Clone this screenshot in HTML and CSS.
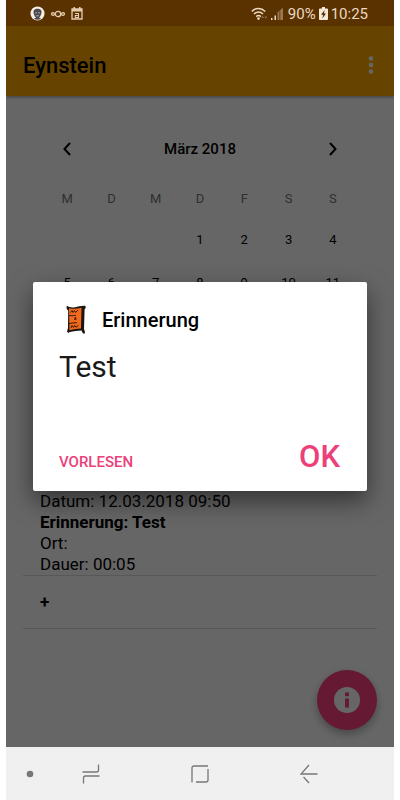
FILE: index.html
```html
<!DOCTYPE html>
<html lang="de">
<head>
<meta charset="utf-8">
<meta name="viewport" content="width=device-width, initial-scale=1">
<title>Eynstein</title>
<link rel="stylesheet" href="styles.css">
</head>
<body>
<div class="phone">
  <header class="status">
    <div class="status-group">
      <svg width="15" height="15" viewBox="0 0 16 16" aria-hidden="true">
        <circle cx="8" cy="8" r="7.5" fill="#f6efe6"/>
        <path d="M3.800 7.500C3.400 4 5.400 2.800 8 2.800s4.800 1.200 4.300 4.700l-.8 2.200c-.5 1.800-1.200 2.300-2 2.600l2.400 1.200c-2.200 1.600-5.600 1.600-7.800 0l2.400-1.200c-1-.4-1.600-1.200-2-2.600z" fill="#4b4a4c"/>
        <path d="M5.400 7.300h2.100M8.600 7.300h2.100M6.600 10.400h2.800" stroke="#b9b3ad" stroke-width="1"/>
      </svg>
      <svg width="14" height="10" viewBox="0 0 14 10" fill="none" stroke="#e3cdb2" stroke-width="1.300" aria-hidden="true">
        <circle cx="7" cy="5" r="2.700"/><circle cx="2" cy="5" r="1.400"/><circle cx="12" cy="5" r="1.400"/>
      </svg>
      <svg width="12" height="13" viewBox="0 0 12 13" aria-hidden="true">
        <path d="M1 2h10v10H1z" fill="none" stroke="#e3cdb2" stroke-width="1.300"/>
        <path d="M1 2h10v2.600H1zM2.400 0h1.600v2H2.400zM8 0h1.600v2H8z" fill="#e3cdb2"/>
        <path d="M4 6.500h3.500v4H4.300V8.500h3" fill="none" stroke="#e3cdb2" stroke-width="1.100"/>
      </svg>
    </div>
    <div class="status-group status-right">
      <svg width="34" height="14" viewBox="0 0 34 14" aria-hidden="true">
        <path d="M.8 4.400C4.600 .5 10.400 .5 14.200 4.400M3 7.100c2.600-2.700 6.400-2.700 9 0M5.200 9.600c1.400-1.400 3.200-1.400 4.600 0" fill="none" stroke="#ecd9c2" stroke-width="1.500"/>
        <circle cx="7.500" cy="11.600" r="1.300" fill="#ecd9c2"/>
        <path d="M10.200 11l1.400-2.600 1.400 2.600zM13.400 9.400h2.800l-1.400 2.800z" fill="#8c6a45"/>
        <path d="M20 11h1.500v2H20zM23.500 8.500H25V13h-1.500z" fill="#ecd9c2"/>
        <path d="M26.500 5.500L28.500 3.600V13h-2zM29.200 3L32 .8V13h-2.800z" fill="#9a7752"/>
      </svg>
      <span>90%</span>
      <svg width="9" height="13" viewBox="0 0 9 13" aria-hidden="true">
        <path d="M3 0h3v1.500h2.200q.8 0 .8.800V12q0 1-.8 1H.8Q0 13 0 12V2.300q0-.8.800-.8H3z" fill="#f6e8d6"/>
        <path d="M5.700 3L2 7.800h2.200L3.300 11.400 7 6.600H4.900z" fill="#4a2a00"/>
      </svg>
      <span>10:25</span>
    </div>
  </header>

  <div class="app">
    <div class="toolbar">
      <h1>Eynstein</h1>
      <button type="button" aria-label="Menü">
        <svg width="6" height="18" viewBox="0 0 6 18" fill="#fff"><circle cx="3" cy="2.500" r="2.300"/><circle cx="3" cy="9" r="2.300"/><circle cx="3" cy="15.500" r="2.300"/></svg>
      </button>
    </div>

    <main class="content">
      <section class="calendar">
        <div class="month">
          <button type="button" aria-label="Voriger Monat">
            <svg width="8" height="14" viewBox="0 0 8 14" fill="none" stroke="#000" stroke-width="2"><path d="M7 1L1.500 7 7 13"/></svg>
          </button>
          <h2>März 2018</h2>
          <button type="button" aria-label="Nächster Monat">
            <svg width="8" height="14" viewBox="0 0 8 14" fill="none" stroke="#000" stroke-width="2"><path d="M1 1l5.500 6L1 13"/></svg>
          </button>
        </div>
        <table class="days">
          <thead><tr><th>M</th><th>D</th><th>M</th><th>D</th><th>F</th><th>S</th><th>S</th></tr></thead>
          <tbody>
            <tr><td></td><td></td><td></td><td>1</td><td>2</td><td>3</td><td>4</td></tr>
            <tr><td>5</td><td>6</td><td>7</td><td>8</td><td>9</td><td>10</td><td>11</td></tr>
          </tbody>
        </table>
      </section>
      <ul class="entries">
        <li>
          <p>Datum: 12.03.2018 09:50</p>
          <p><strong>Erinnerung: Test</strong></p>
          <p>Ort:</p>
          <p>Dauer: 00:05</p>
        </li>
        <li class="add"><button type="button">+</button></li>
      </ul>
    </main>

    <button class="fab" type="button" aria-label="Info">
      <svg width="26" height="26" viewBox="0 0 26 26"><circle cx="13" cy="13" r="13" fill="#fff"/><path d="M11 5.500h4v3.700h-4zM11 11.500h4v9h-4z" fill="#ff4081"/></svg>
    </button>

    <div class="scrim">
      <div class="dialog" role="dialog" aria-labelledby="dialog-title">
        <div class="dialog-head">
          <svg width="22" height="30" viewBox="0 0 22 30" aria-hidden="true">
            <path d="M2 .8c2 1.600 5 2 8 1.400S17 .5 20 .8c1.200 1 .8 2.600-.4 3.400L19 24.500c1 1.200 1.200 3 .6 4.300l-1.800-.6-1.300-2.800c-4 .4-8 .6-11.600 1.600L3.200 28 2 26.500 3 23 3.200 5.500C1.600 4.500 1 2.500 2 .8z" fill="#1c1512"/>
            <path d="M4 3.200c4 1 8.500.6 12.500-.4L16 23.500c-4 .2-7.500.6-11.500 1.700z" fill="#f26a1b"/>
            <path d="M5.500 7.500l1.500-2 1 2 1.500-2 1 2L13 5M4 10.500c3 .4 5 .2 7-.2M9.500 15l1-3 .5 3M4 18.500c3-.4 5-.8 8-.8M6 23l1-2.500 1.500 2 1-2.200 1.500 2 2.500-2" fill="none" stroke="#3a1708" stroke-width="1"/>
          </svg>
          <h2 id="dialog-title">Erinnerung</h2>
        </div>
        <p class="message">Test</p>
        <div class="actions">
          <button type="button">VORLESEN</button>
          <button class="confirm" type="button">OK</button>
        </div>
      </div>
    </div>
  </div>

  <nav class="navbar">
    <button type="button" aria-label="Leiste ausblenden">
      <svg width="8" height="8" viewBox="0 0 8 8"><circle cx="4" cy="4" r="3.300" fill="#777"/></svg>
    </button>
    <div class="nav-main">
      <button type="button" aria-label="Letzte Apps">
        <svg width="18" height="20" viewBox="0 0 18 20" fill="none" stroke="#777" stroke-width="1.300"><path d="M.5 8h14q2 0 2-2V.5M17.500 12h-14q-2 0-2 2v5.500"/></svg>
      </button>
      <button type="button" aria-label="Startseite">
        <svg width="18" height="18" viewBox="0 0 18 18" fill="none" stroke="#777" stroke-width="1.300"><path d="M1 17.500V3q0-2 2-2h14M5 17h10q2 0 2-2V4"/></svg>
      </button>
      <button type="button" aria-label="Zurück">
        <svg width="18" height="20" viewBox="0 0 18 20" fill="none" stroke="#777" stroke-width="1.300"><path d="M9 1L1 10h16.500M3.500 13l5.500 6"/></svg>
      </button>
    </div>
  </nav>
</div>
</body>
</html>
```

FILE: styles.css
```css
* {
  box-sizing: border-box;
}

body {
  margin: 0;
  background: #fff;
  color: #000;
  font-family: Roboto, sans-serif;
}

h1, h2, p, ul {
  margin: 0;
  padding: 0;
}

button {
  padding: 0;
  border: 0;
  background: none;
  color: inherit;
  font: inherit;
}

svg {
  display: block;
}

.phone {
  display: flex;
  flex-direction: column;
  min-height: 100vh;
  margin: 0 6px;
}

.status {
  display: flex;
  justify-content: space-between;
  align-items: center;
  height: 26px;
  padding: 1px 26px 0 24px;
  background: #5a3200;
  color: #ecd9c2;
  font-size: 15px;
}

.status-group {
  display: flex;
  align-items: center;
  gap: 6px;
}

.status-right {
  gap: 3px;
}

.app {
  position: relative;
  display: flex;
  flex: 1;
  flex-direction: column;
  background: #fff;
  overflow: hidden;
}

.toolbar {
  display: flex;
  justify-content: space-between;
  align-items: center;
  height: 70px;
  padding: 8px 20px 0 17px;
  background: #ffaa00;
  box-shadow: 0 1px 3px rgba(0, 0, 0, 0.4);
}

.toolbar h1 {
  font-size: 22px;
  font-weight: 500;
}

.content {
  flex: 1;
  padding: 32px 17px 0;
}

.calendar {
  height: 363px;
  padding: 0 22px;
}

.month {
  display: flex;
  justify-content: space-between;
  align-items: center;
  height: 42px;
  padding: 0 18px;
}

.month h2 {
  font-size: 15px;
  font-weight: 500;
}

.days {
  width: 100%;
  border-collapse: collapse;
  table-layout: fixed;
  font-size: 13px;
  text-align: center;
}

.days th,
.days td {
  height: 43px;
  padding: 0;
}

.days thead th {
  height: 48px;
  padding-top: 8px;
  color: #777;
  font-weight: 400;
}

.entries {
  list-style: none;
  font-size: 17px;
  line-height: 21px;
}

.entries li {
  padding: 0 17px;
  border-bottom: 1px solid #ddd;
}

.entries .add {
  display: flex;
  align-items: center;
  height: 53px;
  font-weight: 700;
}

.fab {
  position: absolute;
  right: 17px;
  bottom: 17px;
  display: grid;
  place-items: center;
  width: 60px;
  height: 60px;
  border-radius: 50%;
  background: #ff4081;
  box-shadow: 0 4px 8px rgba(0, 0, 0, 0.3);
}

.scrim {
  position: absolute;
  inset: 0;
  display: flex;
  align-items: center;
  padding: 0 27px;
  background: rgba(0, 0, 0, 0.6);
}

.dialog {
  flex: 1;
  padding: 23px 27px 9px 26px;
  border-radius: 2px;
  background: #fff;
  box-shadow: 0 10px 24px rgba(0, 0, 0, 0.5);
}

.dialog-head {
  display: flex;
  align-items: center;
  gap: 15px;
  padding-left: 6px;
}

.dialog-head h2 {
  font-size: 20px;
  font-weight: 500;
}

.message {
  margin-top: 12px;
  font-size: 30px;
  line-height: 40px;
  color: #1a1a1a;
}

.actions {
  display: flex;
  justify-content: space-between;
  align-items: baseline;
  margin-top: 50px;
  color: #ec407a;
  font-size: 15px;
  font-weight: 500;
  line-height: 40px;
}

.confirm {
  font-size: 31px;
}

.navbar {
  display: flex;
  align-items: center;
  height: 53px;
  padding: 0 76px 0 20px;
  background: #f0f0f0;
}

.nav-main {
  display: flex;
  flex: 1;
  justify-content: space-between;
  align-items: center;
  margin-left: 48px;
}
```
